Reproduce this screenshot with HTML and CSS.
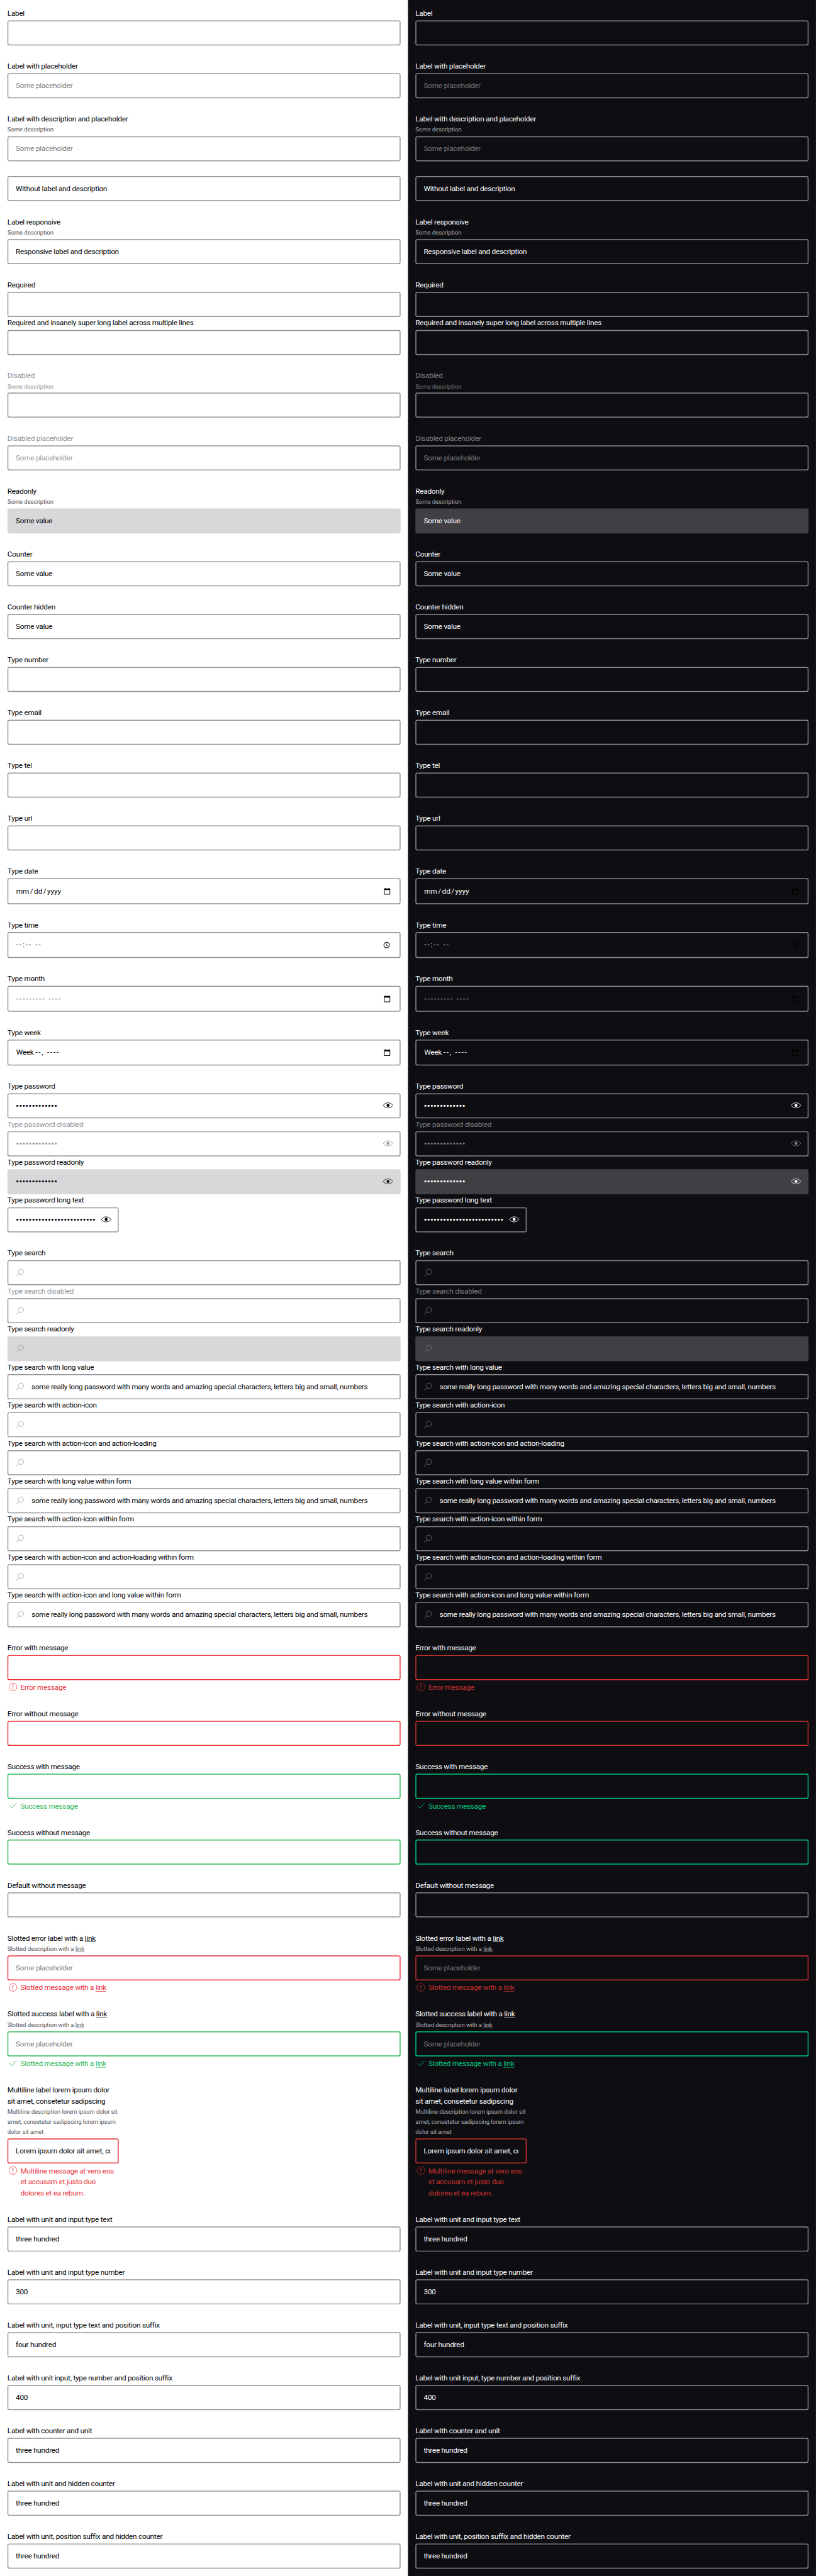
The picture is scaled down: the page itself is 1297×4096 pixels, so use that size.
FILE: index.html
```
<!DOCTYPE html>
<html lang="en">
<head>
<meta charset="utf-8">
<title>Text field wrapper</title>
<link rel="stylesheet" href="styles.css">
</head>
<body>
<svg class="sprite" aria-hidden="true">
  <symbol id="eye" viewBox="0 0 24 24"><path d="M1.500 12C4.500 8.200 8 6.500 12 6.500s7.500 1.700 10.500 5.500c-3 3.800-6.500 5.500-10.500 5.500S4.500 15.800 1.500 12z" fill="none" stroke="currentColor" stroke-width="1.200"/><circle cx="12" cy="12" r="3.200" fill="currentColor"/></symbol>
  <symbol id="search" viewBox="0 0 24 24"><circle cx="14" cy="10" r="5.800" fill="none" stroke="currentColor"/><path d="M9.900 14.100 4.200 19.800" fill="none" stroke="currentColor" stroke-width="1.200"/></symbol>
  <symbol id="error" viewBox="0 0 24 24"><circle cx="12" cy="12" r="8.500" fill="none" stroke="currentColor"/><path d="M11 7h2l-.4 6.300h-1.200zM11.100 14.700h1.800v1.900h-1.800z" fill="currentColor"/></symbol>
  <symbol id="success" viewBox="0 0 24 24"><path d="M4.800 11.800 9.800 17 19.200 6.800" fill="none" stroke="currentColor" stroke-width="1.200"/></symbol>
  <symbol id="calendar" viewBox="0 0 24 24"><path d="M20 3h-1V1h-2v2H7V1H5v2H4c-1.100 0-2 .9-2 2v16c0 1.100.9 2 2 2h16c1.100 0 2-.9 2-2V5c0-1.100-.9-2-2-2zm0 18H4V8h16v13z" fill="currentColor"/></symbol>
  <symbol id="clock" viewBox="0 0 24 24"><path d="M12 2C6.500 2 2 6.500 2 12s4.500 10 10 10 10-4.500 10-10S17.500 2 12 2zm0 18c-4.400 0-8-3.600-8-8s3.600-8 8-8 8 3.600 8 8-3.600 8-8 8zm.5-13H11v6l5.200 3.200.8-1.300-4.500-2.700V7z" fill="currentColor"/></symbol>
</svg>
<div class="page">
  <main class="theme theme-light"></main>
  <main class="theme theme-dark"></main>
</div>
<script src="fields.js"></script>
</body>
</html>
```
FILE: styles.css
```
* { box-sizing: border-box; }
html { height: 4096px; overflow: hidden; background: #fff; }
body { margin: 0; width: 1297px; height: 4096px; overflow: clip; }
.sprite { display: none; }

/* The sheet is laid out at 1760px and scaled down to the window. */
.page {
  display: grid;
  grid-template-columns: 880px 880px;
  width: 1760px;
  height: 5558px;
  transform: scale(0.7369, 0.73695);
  transform-origin: 0 0;
  font: 400 16px/24px Roboto, "Liberation Sans", sans-serif;
  letter-spacing: -0.360px;
}

.theme {
  display: flex;
  flex-direction: column;
  gap: 32px;
  padding: 16px;
  color: var(--text);
  background: var(--bg);
}
.theme-light {
  --bg: #fff; --text: #010205; --muted: #535457; --line: #949598; --off: #949598;
  --hint: #808080; --fill: #d8d8db; --red: #e9323b; --green: #33b85b;
}
.theme-dark {
  --bg: #0e0e12; --text: #fbfcff; --muted: #afb0b3; --line: #88898c; --off: #7c7d80;
  --hint: #757575; --fill: #404044; --red: #c9312e; --green: #02c77e;
}

.label, .desc, .message { white-space: nowrap; }
.label, .desc { padding-top: 1px; margin-bottom: -1px; }
.desc { font-size: 13px; line-height: 21.780px; letter-spacing: -0.130px; color: var(--muted); }
.box {
  display: flex;
  align-items: center;
  height: 54px;
  padding: 0 16px;
  border: 2px solid var(--line);
  border-radius: 4px;
  white-space: nowrap;
}
.label + .box, .desc + .box { margin-top: 4px; }
.value { flex: 1; min-width: 0; overflow: hidden; }
.link { text-decoration: underline; text-underline-offset: 2px; }
.narrow { width: 240px; }

.placeholder .value { color: var(--hint); }
.disabled, .disabled .desc, .disabled .value { color: var(--off); }
.readonly .box { background: var(--fill); border-color: var(--fill); }
.error .box { border-color: var(--red); }
.success .box { border-color: var(--green); }

.message { display: flex; gap: 4px; margin-top: 4px; }
.error .message { color: var(--red); }
.success .message { color: var(--green); }

.icon { flex: none; width: 24px; height: 24px; }
.message .icon { margin-top: -1px; }
.search .icon { margin: 0 13px 0 -3px; color: var(--off); }
.search .value { margin-right: -3px; letter-spacing: -0.390px; }
.password .icon { margin: -2px -3px 0 11px; }
.password .value { font-size: 21px; letter-spacing: -0.200px; }

.picker .box { height: 56px; }
.picker .icon { width: 16px; height: 16px; margin-right: 3px; color: #000; }
.time .icon { margin-right: 4px; }
.picker .value { padding-left: 1px; }
.date .value { letter-spacing: -0.100px; }
.time .value, .month .value { letter-spacing: 2.600px; }
.week .dash { letter-spacing: 2.400px; }
.date .sep { padding: 0 2px; }
```
FILE: fields.js
```
const link = '<span class="link">link</span>';
const dots = '•'.repeat(13);
const long = 'some really long password with many words and amazing special characters, letters big and small, numbers';

// Each group is separated by a gap; each field is [kind, label, description, value, message].
const groups = [
  [['', 'Label']],
  [['placeholder', 'Label with placeholder', '', 'Some placeholder']],
  [['placeholder', 'Label with description and placeholder', 'Some description', 'Some placeholder']],
  [['', '', '', 'Without label and description']],
  [['', 'Label responsive', 'Some description', 'Responsive label and description']],
  [['', 'Required'], ['', 'Required and insanely super long label across multiple lines']],
  [['disabled', 'Disabled', 'Some description']],
  [['disabled placeholder', 'Disabled placeholder', '', 'Some placeholder']],
  [['readonly', 'Readonly', 'Some description', 'Some value']],
  [['', 'Counter', '', 'Some value']],
  [['', 'Counter hidden', '', 'Some value']],
  [['', 'Type number']],
  [['', 'Type email']],
  [['', 'Type tel']],
  [['', 'Type url']],
  [['picker date', 'Type date', '', 'mm<span class="sep">/</span>dd<span class="sep">/</span>yyyy']],
  [['picker time', 'Type time', '', '--:-- --']],
  [['picker month', 'Type month', '', '--------- ----']],
  [['picker week', 'Type week', '', 'Week <span class="dash">--, ----</span>']],
  [
    ['password', 'Type password', '', dots],
    ['password disabled', 'Type password disabled', '', dots],
    ['password readonly', 'Type password readonly', '', dots],
    ['password narrow', 'Type password long text', '', '•'.repeat(25)],
  ],
  [
    ['search', 'Type search'],
    ['search disabled', 'Type search disabled'],
    ['search readonly', 'Type search readonly'],
    ['search', 'Type search with long value', '', long],
    ['search', 'Type search with action-icon'],
    ['search', 'Type search with action-icon and action-loading'],
    ['search', 'Type search with long value within form', '', long],
    ['search', 'Type search with action-icon within form'],
    ['search', 'Type search with action-icon and action-loading within form'],
    ['search', 'Type search with action-icon and long value within form', '', long],
  ],
  [['error', 'Error with message', '', '', 'Error message']],
  [['error', 'Error without message']],
  [['success', 'Success with message', '', '', 'Success message']],
  [['success', 'Success without message']],
  [['', 'Default without message']],
  [['error placeholder', `Slotted error label with a ${link}`, `Slotted description with a ${link}`, 'Some placeholder', `Slotted message with a ${link}`]],
  [['success placeholder', `Slotted success label with a ${link}`, `Slotted description with a ${link}`, 'Some placeholder', `Slotted message with a ${link}`]],
  [['error narrow', 'Multiline label lorem ipsum dolor<br>sit amet, consetetur sadipscing', 'Multiline description lorem ipsum dolor sit<br>amet, consetetur sadipscing lorem ipsum<br>dolor sit amet', 'Lorem ipsum dolor sit amet, co', 'Multiline message at vero eos<br>et accusam et justo duo<br>dolores et ea rebum.']],
  [['', 'Label with unit and input type text', '', 'three hundred']],
  [['', 'Label with unit and input type number', '', '300']],
  [['', 'Label with unit, input type text and position suffix', '', 'four hundred']],
  [['', 'Label with unit input, type number and position suffix', '', '400']],
  [['', 'Label with counter and unit', '', 'three hundred']],
  [['', 'Label with unit and hidden counter', '', 'three hundred']],
  [['', 'Label with unit, position suffix and hidden counter', '', 'three hundred']],
];

const icon = (name) => `<svg class="icon"><use href="#${name}"/></svg>`;

function field([kind, label, desc, value, message]) {
  const is = (name) => kind.split(' ').includes(name);
  const trailing = is('password') ? icon('eye') : is('time') ? icon('clock') : is('picker') ? icon('calendar') : '';
  return `<div class="field ${kind}">
    ${label ? `<div class="label">${label}</div>` : ''}
    ${desc ? `<div class="desc">${desc}</div>` : ''}
    <div class="box">${is('search') ? icon('search') : ''}<span class="value">${value || ''}</span>${trailing}</div>
    ${message ? `<div class="message">${icon(is('error') ? 'error' : 'success')}<span>${message}</span></div>` : ''}
  </div>`;
}

const html = groups.map((fields) => `<section class="group">${fields.map(field).join('')}</section>`).join('');
document.querySelectorAll('.theme').forEach((theme) => { theme.innerHTML = html; });
```
